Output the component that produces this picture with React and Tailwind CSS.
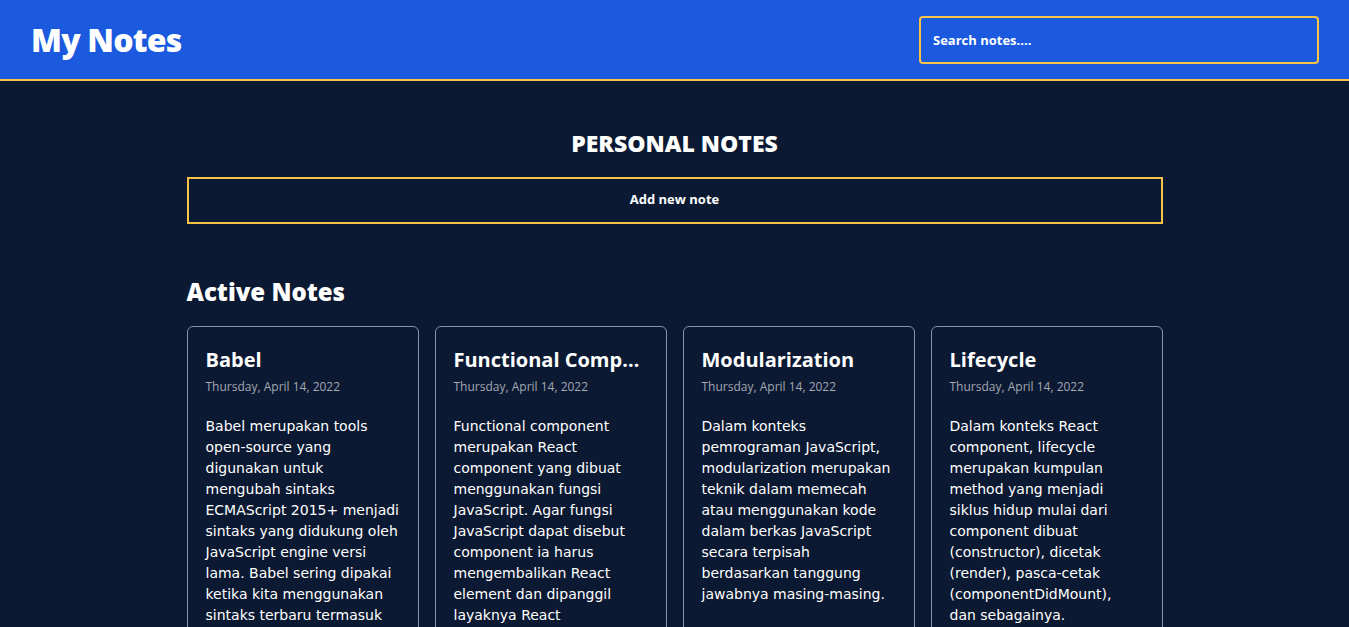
import React from 'react';

const notes = [
  {
    id: 1,
    title: 'Babel',
    date: 'Thursday, April 14, 2022',
    body: 'Babel merupakan tools open-source yang digunakan untuk mengubah sintaks ECMAScript 2015+ menjadi sintaks yang didukung oleh JavaScript engine versi lama. Babel sering dipakai ketika kita menggunakan sintaks terbaru termasuk sintaks JSX.',
  },
  {
    id: 2,
    title: 'Functional Component',
    date: 'Thursday, April 14, 2022',
    body: 'Functional component merupakan React component yang dibuat menggunakan fungsi JavaScript. Agar fungsi JavaScript dapat disebut component ia harus mengembalikan React element dan dipanggil layaknya React component.',
  },
  {
    id: 3,
    title: 'Modularization',
    date: 'Thursday, April 14, 2022',
    body: 'Dalam konteks pemrograman JavaScript, modularization merupakan teknik dalam memecah atau menggunakan kode dalam berkas JavaScript secara terpisah berdasarkan tanggung jawabnya masing-masing.',
  },
  {
    id: 4,
    title: 'Lifecycle',
    date: 'Thursday, April 14, 2022',
    body: 'Dalam konteks React component, lifecycle merupakan kumpulan method yang menjadi siklus hidup mulai dari component dibuat (constructor), dicetak (render), pasca-cetak (componentDidMount),\ndan sebagainya.',
  },
];

const NoteItem = ({ note }) => (
  <div className="border border-[#8b93a3] rounded-md px-[18px] pt-[20px] pb-4 min-w-0">
    <h3 className="text-[20px] leading-[26px] font-bold text-white truncate">{note.title}</h3>
    <p className="text-[12px] text-[#a3a8b3] mt-[5px]">{note.date}</p>
    <p className="text-[14px] leading-[21px] text-white mt-[20px] whitespace-pre-line font-['DejaVu_Sans',sans-serif]">{note.body}</p>
  </div>
);

const App = () => {
  return (
    <div className="min-h-screen bg-[#0b1932] text-white font-['Open_Sans','DejaVu_Sans',sans-serif]">
      {/* Header */}
      <header className="h-[81px] bg-[#1b5ade] border-b-2 border-[#f7c347] flex items-center justify-between pl-[31px] pr-[30px]">
        <h1 className="text-[32px] font-extrabold tracking-tight">My Notes</h1>
        <input
          type="text"
          placeholder="Search notes...."
          className="w-[400px] h-[48px] bg-transparent border-2 border-[#f7c347] rounded-[4px] px-3 text-[13px] font-bold text-white placeholder:text-white outline-none"
        />
      </header>

      {/* Body */}
      <main className="w-[976px] mx-auto pt-[45px]">
        <h2 className="text-center text-[23px] font-extrabold uppercase">Personal Notes</h2>
        <button className="mt-[16px] w-full h-[47px] border-2 border-[#f7c347] text-[13px] font-bold">
          Add new note
        </button>

        <h2 className="mt-[50px] text-[24px] font-extrabold">Active Notes</h2>
        <div className="grid grid-cols-4 gap-4 mt-[16px]">
          {notes.map((note) => (
            <NoteItem key={note.id} note={note} />
          ))}
        </div>
      </main>
    </div>
  );
};

export default App;
